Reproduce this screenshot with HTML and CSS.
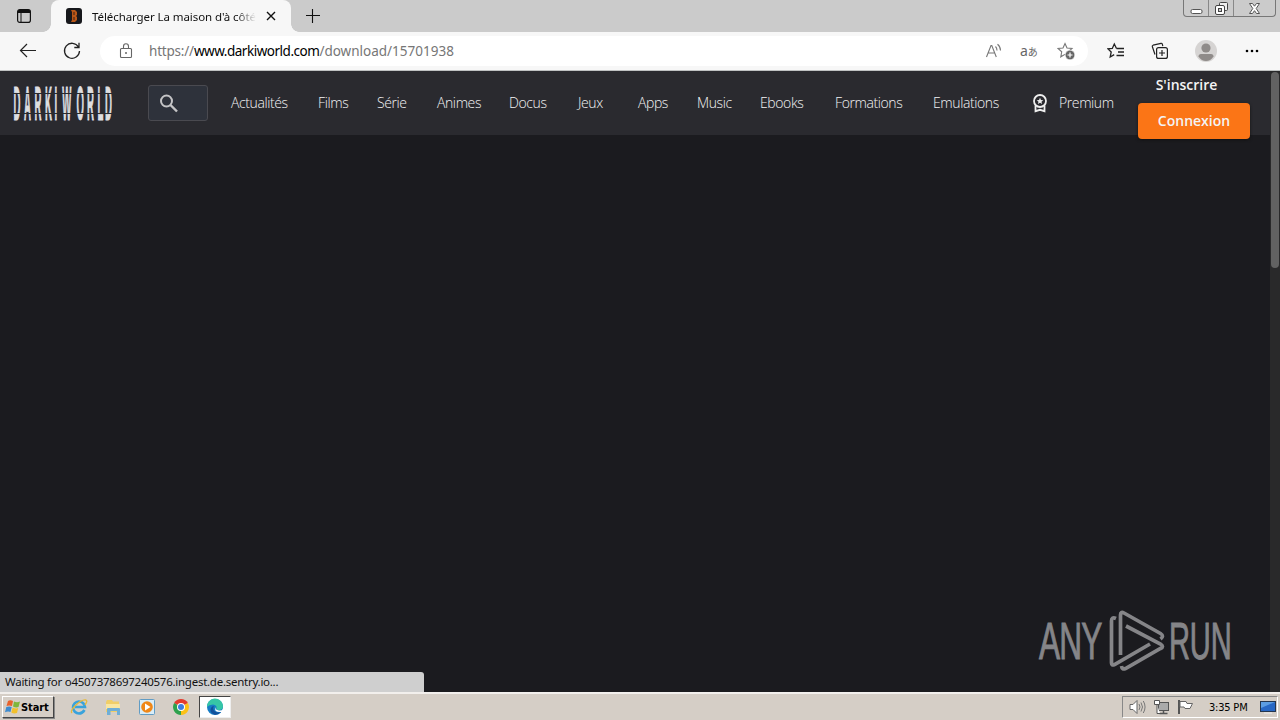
FILE: index.html
```html
<!DOCTYPE html>
<html lang="fr">
<head>
  <meta charset="UTF-8">
  <title>Télécharger La maison d'à côté</title>
  <link rel="stylesheet" href="styles.css">
</head>
<body>

  <!-- Tabs -->
  <div class="tab-strip">
    <svg class="tab-actions" width="16" height="16" viewBox="0 0 16 16"><rect x="1.600" y="1.600" width="12.800" height="12.800" rx="2.200" fill="none" stroke="#111" stroke-width="1.200"/><path d="M2 5V3q0-1 1-1h10q1 0 1 1v2z" fill="#111"/><path d="M5 5v9" stroke="#111"/></svg>
    <div class="tab">
      <svg width="16" height="16" viewBox="0 0 16 16"><rect width="16" height="16" rx="3" fill="#17181c"/><path d="M5 2h4l2 2v3l-1 1 1 1v3l-2 2H5l1-2V4z" fill="#b95718"/><path d="M8 4v3M8 9v3" stroke="#3a2015"/></svg>
      <span class="tab-title">Télécharger La maison d'à côté</span>
      <svg class="tab-close" width="10" height="10" viewBox="0 0 10 10"><path d="M1 1l8 8M9 1L1 9" stroke="#111" stroke-width="1.400"/></svg>
    </div>
    <svg class="new-tab" width="14" height="14" viewBox="0 0 14 14"><path d="M6.500 0v14M0 6.500h14" stroke="#111" stroke-width="1.100"/></svg>
    <div class="window-buttons">
      <span><svg width="13" height="13" viewBox="0 0 13 13"><rect x="1" y="7.500" width="11" height="4" rx="1.500" fill="#fff" stroke="#555"/></svg></span>
      <span><svg width="13" height="13" viewBox="0 0 13 13"><rect x="4.500" y=".5" width="8" height="8" rx="1" fill="#eee" stroke="#444"/><rect x=".5" y="3.500" width="9" height="9" rx="1.500" fill="#fff" stroke="#444"/><rect x="3.500" y="6.500" width="3" height="3" fill="#ccc" stroke="#444"/></svg></span>
      <span class="wide"><svg width="13" height="13" viewBox="0 0 13 13"><path d="M1.500 1.500h3l2 2.700 2-2.700h3l-3.300 5 3.300 5h-3l-2-2.800-2 2.800h-3l3.300-5z" fill="#fff" stroke="#555"/></svg></span>
    </div>
  </div>

  <!-- Address bar -->
  <div class="toolbar">
    <svg class="back" width="18" height="16" viewBox="0 0 18 16"><path d="M17 7.500H1.500M8 1L1.500 7.500 8 14" fill="none" stroke="#222" stroke-width="1.200"/></svg>
    <svg class="reload" width="18" height="18" viewBox="0 0 18 18"><path d="M15.500 5A7.500 7.500 0 1 0 16.500 9M16 .8V5.500H11.300" fill="none" stroke="#222" stroke-width="1.300"/></svg>
    <div class="address">
      <svg width="14" height="16" viewBox="0 0 14 16"><path d="M2.500 5.500h9q1 0 1 1v7q0 1-1 1h-9q-1 0-1-1v-7q0-1 1-1zM4.500 5.500V3.500a2.500 2.700 0 0 1 5 0v2" fill="none" stroke="#666" stroke-width="1.100"/><circle cx="7" cy="10" r="1" fill="#666"/></svg>
      <span class="url">https://<b>www.darkiworld.com</b><i>/download/15701938</i></span>
      <svg class="read" width="18" height="16" viewBox="0 0 18 16"><path d="M1.500 14L6 2.500h.8L11.300 14M3.200 10h6.500M10.500 3.500q1.500 1.500 1.500 4M12.500 1.200q3 2.300 3 6.300" fill="none" stroke="#777" stroke-width="1.100"/></svg>
      <span class="translate">a<small>あ</small></span>
      <svg class="fav" width="18" height="18" viewBox="0 0 18 18"><path d="M8 1.500l2 4.500 5 .5-3.700 3.300.9 5L8 12.300l-4.200 2.500.9-5L1 6.500 6 6z" fill="none" stroke="#777" stroke-width="1.100"/><circle cx="13" cy="13" r="4.800" fill="#666" stroke="#fff" stroke-width=".6"/><path d="M13 10.500v5M10.500 13h5" stroke="#fff" stroke-width="1.200"/></svg>
    </div>
    <svg class="favorites" width="18" height="18" viewBox="0 0 18 18"><path d="M9.500 6.500L7.300 2 5.300 6.500l-4.300.4L4.200 10l-1 5 4-2.400M9.500 6.500H17M11 10h6M9.500 13.500H17" fill="none" stroke="#222" stroke-width="1.300"/></svg>
    <svg class="collections" width="18" height="18" viewBox="0 0 18 18"><path d="M4 12.500L1.300 4.500q-.2-1 .8-1.300L10 1.300q1-.2 1.300.8l.5 2" fill="none" stroke="#222" stroke-width="1.200"/><rect x="5.600" y="5.600" width="10.800" height="10.800" rx="2" fill="none" stroke="#222" stroke-width="1.200"/><path d="M11 8v6M8 11h6" stroke="#222" stroke-width="1.200"/></svg>
    <svg class="profile" width="22" height="22" viewBox="0 0 22 22"><circle cx="11" cy="11" r="11" fill="#d6d4d3"/><circle cx="11" cy="8" r="4.600" fill="#8f8b89"/><path d="M3.500 16.500q0-2.500 2.500-2.500h10q2.500 0 2.500 2.500-3 4.500-7.500 4.500t-7.500-4.500z" fill="#8f8b89"/></svg>
    <svg class="more" width="14" height="4" viewBox="0 0 14 4"><circle cx="2" cy="2" r="1.300"/><circle cx="7" cy="2" r="1.300"/><circle cx="12" cy="2" r="1.300"/></svg>
  </div>

  <main class="page">
    <div class="content">
      <header class="site-header">
        <svg class="logo" width="102" height="40" viewBox="0 0 102 40">
          <g transform="scale(.2 1)"><text y="37" x="2 55 107 160 208 246 318 370 423 460">DARKIWORLD</text></g>
          <path d="M0 10.500h102M0 30.500h102" stroke="#2a2a2f" stroke-width="1"/>
        </svg>
        <div class="search"><svg width="20" height="20" viewBox="0 0 20 20"><circle cx="7.500" cy="7" r="5.500" fill="none" stroke="#c4c4c6" stroke-width="2"/><path d="M11.500 11l6.500 6.500" stroke="#c4c4c6" stroke-width="2.400"/></svg></div>
        <nav>
          <a>Actualités</a>
          <a>Films</a>
          <a>Série</a>
          <a>Animes</a>
          <a>Docus</a>
          <a>Jeux</a>
          <a>Apps</a>
          <a>Music</a>
          <a>Ebooks</a>
          <a>Formations</a>
          <a>Emulations</a>
        </nav>
        <a class="premium">
          <svg width="16" height="20" viewBox="0 0 16 20"><circle cx="8" cy="8" r="6" fill="none" stroke="#eee" stroke-width="1.800"/><path d="M8 4.800l1 2.200 2.300.2-1.800 1.500.6 2.300L8 9.800 5.900 11l.6-2.300-1.800-1.500L7 7z" fill="#eee"/><path d="M3.500 12.500v5.700L8 16.800l4.500 1.400v-5.700" fill="none" stroke="#eee" stroke-width="1.800"/></svg>
          <span>Premium</span>
        </a>
        <div class="auth">
          <a class="register">S'inscrire</a>
          <a class="login">Connexion</a>
        </div>
      </header>
    </div>
    <div class="scrollbar"><div class="thumb"></div></div>

    <svg class="watermark" width="200" height="66" viewBox="0 0 200 66">
      <g transform="translate(2 51) scale(.62 1)"><text textLength="102">ANY</text></g>
      <g transform="translate(132 51) scale(.57 1)"><text textLength="110">RUN</text></g>
      <path d="M79 10.500Q74.500 8.500 74.500 13V55q0 3 3 1.500L113 36M83.500 47V7q0-4 3.500-2L123.500 25.500q4 2.500 0 5.500M89 18l34.500 18q4 2.500 0 4.500L88.500 60.500q-3.500 1.500-4-2.500" fill="none" stroke="#858588" stroke-width="3.700"/>
    </svg>
    <div class="status">Waiting for o4507378697240576.ingest.de.sentry.io...</div>
  </main>

  <!-- Taskbar -->
  <footer class="taskbar">
    <div class="start">
      <svg width="16" height="16" viewBox="0 0 16 16"><path d="M3 2q2-1.500 5 0L7 7Q4 6 1.500 7z" fill="#e8622c"/><path d="M9 2.500q3 1.500 6 0L13.500 8Q11 9 8 7.500z" fill="#7fb63c"/><path d="M1.300 8q3-1 5.400 0l-1.200 5Q3 12 0 13.200z" fill="#3d8bd0"/><path d="M7.700 8.500q3 1.500 5.500.5L12 14q-3 1-5.700-.5z" fill="#f2c02c"/></svg>
      <span>Start</span>
    </div>
    <div class="quick">
      <span><svg width="18" height="18" viewBox="0 0 18 18"><path d="M14.500 12q-2 3.500-5.500 3.500a6 6 0 1 1 6-6.500H5" fill="none" stroke="#39a3dc" stroke-width="2.600"/><path d="M2 15q-2-2 3-7 7-7 11-6 2 .8-1 5" fill="none" stroke="#e6b93a" stroke-width="1.300"/></svg></span>
      <span><svg width="18" height="18" viewBox="0 0 18 18"><path d="M2 4l1-2h5l1 1.500h6V14H2z" fill="#f0ce68"/><path d="M2 6h14v5H2z" fill="#f9e6a0"/><path d="M3 17v-6q0-1 1-1h11q1 0 1 1v6h-3v-4H6.500v4z" fill="#6faed6"/></svg></span>
      <span><svg width="18" height="18" viewBox="0 0 18 18"><rect x="1.500" y="1.500" width="15" height="15" rx="1" fill="#d9edf8" stroke="#619cc4"/><circle cx="9" cy="9" r="5.800" fill="#ef8718"/><path d="M7 5.500v7L12.500 9z" fill="#fff"/></svg></span>
      <span><svg width="18" height="18" viewBox="0 0 18 18"><path d="M9 9L2.100 5A8 8 0 0 1 15.900 5z" fill="#e33b2e"/><path d="M9 9L2.100 5A8 8 0 0 0 9 17z" fill="#2da14d"/><path d="M9 9l6.900-4A8 8 0 0 1 9 17z" fill="#fbc116"/><circle cx="9" cy="9" r="4" fill="#fff"/><circle cx="9" cy="9" r="3" fill="#3c7de0"/></svg></span>
      <span class="active"><svg width="18" height="18" viewBox="0 0 18 18"><circle cx="9" cy="9" r="8" fill="#167cc5"/><path d="M1 9a8 8 0 0 1 16-1q0 4-4 4-3 0-2.500-2Q11 7 7 6.500 3 6.500 1 9z" fill="#36c6a6"/><path d="M8 8q-2 3 1 5.500 3 2 6.500 0Q12 17.500 8 16.500 3 14 5 10q1-2 3-2z" fill="#11509b"/><path d="M10 9q-1 3 3 3.500 3 .3 4-1.500v3h-3Q7 14 10 9z" fill="#fff"/></svg></span>
    </div>
    <div class="tray">
      <svg width="17" height="16" viewBox="0 0 17 16"><path d="M1 5.500h3l4-4v13l-4-4H1z" fill="#fff" stroke="#666"/><path d="M10 5q2 3 0 6M12 3.500q3 4.500 0 9M14.300 2q3.500 6 0 12" fill="none" stroke="#777"/></svg>
      <svg width="17" height="16" viewBox="0 0 17 16"><rect x="5.500" y="3.500" width="10" height="8" fill="#aaa" stroke="#555"/><path d="M6.500 14.500h8M10.500 12v2" stroke="#555" stroke-width="1.500"/><path d="M1.500 1.500h5v4h-5zM4 5.500v9h3" fill="#fff" stroke="#555"/></svg>
      <svg width="17" height="16" viewBox="0 0 17 16"><path d="M2 1v14" stroke="#555" stroke-width="2"/><path d="M3 2.500h6l1 2h5.500l-2.500 5H8l-1-1.500H3z" fill="#fff" stroke="#666"/></svg>
      <span class="clock">3:35 PM</span>
      <svg class="desktop" width="16" height="14" viewBox="0 0 16 14"><rect x=".5" y="1.500" width="15" height="10" fill="#2868c4" stroke="#24364e"/><path d="M1 2h14L1 8z" fill="#5c9de2"/><path d="M4 13h8" stroke="#eee"/></svg>
    </div>
  </footer>

</body>
</html>
```
FILE: styles.css
```css
* {
  box-sizing: border-box;
}

body {
  margin: 0;
  height: 720px;
  display: flex;
  flex-direction: column;
  overflow: hidden;
  font-family: "Noto Sans", sans-serif;
  background: #1b1b1f;
}

svg {
  display: block;
  flex: none;
}

/* Browser tabs, the gradients are the curved feet of the tab */
.tab-strip {
  height: 32px;
  display: flex;
  align-items: center;
  padding-left: 16px;
  background:
    radial-gradient(circle at 100% 0, #cbcbcb 7.5px, #f7f7f7 8px) 291px 24px / 8px 8px no-repeat,
    radial-gradient(circle at 0 0, #cbcbcb 7.5px, #f7f7f7 8px) 43px 24px / 8px 8px no-repeat,
    #cbcbcb;
}

.tab {
  width: 240px;
  height: 32px;
  margin-left: 19px;
  padding: 0 15px;
  display: flex;
  align-items: center;
  background: #f7f7f7;
  border-radius: 8px 8px 0 0;
}

.tab-title {
  width: 164px;
  margin-left: 10px;
  overflow: hidden;
  white-space: nowrap;
  font-size: 11.5px;
  letter-spacing: -0.08px;
  color: #111;
  -webkit-mask-image: linear-gradient(90deg, #000 88%, transparent);
}

.tab-close {
  margin-left: 10px;
}

.new-tab {
  margin-left: 15px;
}

.window-buttons {
  margin-left: auto;
  align-self: flex-start;
  width: 93px;
  height: 17px;
  margin-right: 4px;
  display: flex;
  border: 1px solid #777;
  border-top: 0;
  border-radius: 0 0 4px 4px;
}

.window-buttons span {
  width: 25px;
  display: flex;
  align-items: center;
  justify-content: center;
  border-right: 1px solid #888;
}

.window-buttons .wide {
  width: 41px;
  border: 0;
}

/* Address bar */
.toolbar {
  height: 39px;
  display: flex;
  align-items: center;
  padding-left: 19px;
  background: #f7f7f7;
  border-bottom: 1px solid #bfc2c2;
}

.reload {
  margin-left: 26px;
}

.address {
  width: 988px;
  height: 30px;
  margin-left: 19px;
  padding-left: 19px;
  display: flex;
  align-items: center;
  background: #fff;
  border-radius: 15px;
}

.url {
  width: 820px;
  margin-left: 16px;
  font-size: 13.5px;
  letter-spacing: -0.2px;
  white-space: nowrap;
  color: #767676;
}

.url b {
  font-weight: 400;
  letter-spacing: -0.48px;
  color: #000;
}

.url i {
  font-style: normal;
  letter-spacing: 0;
}

.read {
  margin-left: 16px;
}

.translate {
  width: 19px;
  margin-left: 17px;
  font-size: 14px;
  line-height: 18px;
  white-space: nowrap;
  color: #666;
}

.translate small {
  font: 10px "Noto Sans CJK JP", sans-serif;
}

.fav {
  margin-left: 18px;
}

.favorites {
  margin-left: 19px;
}

.collections {
  margin-left: 26px;
}

.profile {
  margin-left: 26px;
}

.more {
  margin-left: 28px;
}

/* Web page */
.page {
  position: relative;
  height: 621px;
  display: flex;
  overflow: hidden;
}

.content {
  width: 1270px;
}

.scrollbar {
  width: 10px;
  padding: 1px 1px 0;
  background: #29292a;
}

.thumb {
  height: 196px;
  border-radius: 4px;
  background: #626262;
}

.site-header {
  height: 64px;
  display: flex;
  align-items: center;
  padding-left: 13px;
  background: #2a2a2f;
  color: #f4f4f5;
  font: 300 14px "Open Sans", sans-serif;
  white-space: nowrap;
}

.logo {
  overflow: visible;
}

.logo text {
  font: bold 48px "Liberation Sans", sans-serif;
  fill: #dedee0;
  stroke: #dedee0;
  stroke-width: 1px;
}

.search {
  width: 60px;
  height: 36px;
  margin-left: 33px;
  padding: 8px 10px;
  background: #2e323b;
  border: 1px solid #4a4a50;
  border-radius: 3px;
}

nav {
  width: 769px;
  margin-left: 23px;
  padding-bottom: 1px;
  display: grid;
  grid-template-columns: 57px 29px 30px 42px 39px 30px 29px 33px 45px 68px 67px;
  column-gap: 30px;
  letter-spacing: -0.4px;
}

.premium {
  margin-left: 32px;
  width: 82px;
  display: flex;
  align-items: center;
  gap: 11px;
  letter-spacing: -0.4px;
}

.premium span {
  padding-bottom: 1px;
}

.auth {
  width: 112px;
  margin-left: 24px;
  font-weight: 600;
  text-align: center;
}

.auth a {
  display: block;
  height: 36px;
  line-height: 36px;
}

.register {
  padding-right: 15px;
}

.login {
  background: #fb7516;
  border-radius: 4px;
  box-shadow: 0 1px 3px #111;
}

.watermark {
  position: absolute;
  left: 1037px;
  top: 537px;
}

.watermark text {
  font: 51px "Liberation Sans", sans-serif;
  fill: #858588;
  stroke: #858588;
  stroke-width: 1px;
}

.status {
  position: absolute;
  left: 0;
  bottom: 0;
  width: 424px;
  height: 20px;
  padding-left: 5px;
  line-height: 20px;
  font-size: 11.5px;
  letter-spacing: -0.26px;
  background: #cfcfcf;
  border-radius: 0 3px 0 0;
  color: #111;
}

/* Windows taskbar */
.taskbar {
  height: 28px;
  display: flex;
  align-items: center;
  padding: 0 2px;
  background: #d5cec6;
  border-top: 2px solid #f2efec;
}

.start {
  width: 52px;
  height: 22px;
  padding-left: 2px;
  display: flex;
  align-items: center;
  border: 1px solid;
  border-color: #fff #444 #444 #fff;
  box-shadow: 1px 1px #888;
  font: bold 11px "DejaVu Sans Condensed", "DejaVu Sans", sans-serif;
  letter-spacing: -0.1px;
}

.quick {
  margin-left: 9px;
  display: flex;
  gap: 2px;
}

.quick span {
  width: 32px;
  height: 22px;
  display: flex;
  align-items: center;
  justify-content: center;
}

.quick .active {
  background: #fff;
  border: 1px solid;
  border-color: #444 #eee #eee #444;
}

.tray {
  width: 156px;
  height: 22px;
  margin-left: auto;
  padding-left: 6px;
  display: flex;
  align-items: center;
  gap: 7px;
  border: 1px solid;
  border-color: #888 #fff #fff #888;
}

.clock {
  width: 39px;
  margin-left: 8px;
  font: 11px "DejaVu Sans Condensed", "DejaVu Sans", sans-serif;
  letter-spacing: -0.2px;
  white-space: nowrap;
}

.desktop {
  margin-left: 5px;
}
```
